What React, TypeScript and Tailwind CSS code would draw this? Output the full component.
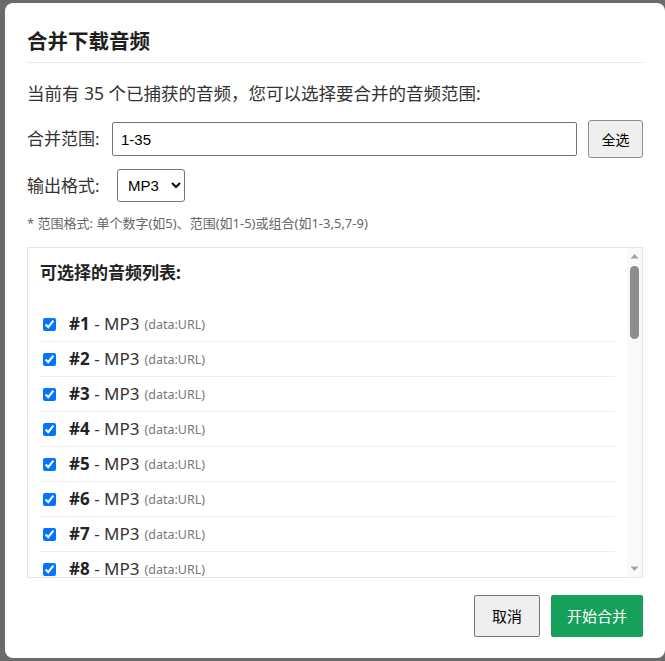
import React from "react";

const items = Array.from({ length: 35 }, (_, i) => i + 1);

export default function App() {
  return (
    <div
      className="w-[665px] h-[661px] bg-[#6b6b6b] pl-[5px] pt-[3px] overflow-hidden"
      style={{ fontFamily: '"Noto Sans", "Noto Sans CJK SC", sans-serif' }}
    >
      <div className="w-[660px] h-[655px] bg-white rounded-[8px] px-[22px] pt-[20px] text-[#222]">
        <div className="h-[40px] border-b border-[#e8e8e8]">
          <h2 className="text-[20.5px] leading-[36px] font-bold text-[#1f1f1f]">合并下载音频</h2>
        </div>
        <p className="mt-[17px] text-[17.5px] leading-[26px] text-[#333]">
          当前有 35 个已捕获的音频，您可以选择要合并的音频范围:
        </p>
        <div className="mt-[14px] flex items-center h-[38px]">
          <span className="text-[17px] text-[#333] w-[85px] shrink-0">合并范围:</span>
          <input
            type="text"
            defaultValue="1-35"
            className="w-[465px] h-[34px] border border-[#767676] rounded-[2px] px-[8px] text-[15px] text-black"
            style={{ fontFamily: '"Liberation Sans", Arial, sans-serif' }}
          />
          <button className="ml-[11px] w-[55px] h-[38px] bg-[#efefef] border border-[#8f8f8f] rounded-[3px] text-[14px] text-black">
            全选
          </button>
        </div>
        <div className="mt-[11px] flex items-center h-[33px]">
          <span className="text-[17px] text-[#333] w-[90px] shrink-0">输出格式:</span>
          <select
            defaultValue="MP3"
            className="w-[68px] h-[33px] border border-[#767676] rounded-[3px] px-[6px] text-[15px] text-black bg-white"
            style={{ fontFamily: '"Liberation Sans", Arial, sans-serif', appearance: "auto" }}
          >
            <option>MP3</option>
            <option>WAV</option>
          </select>
        </div>
        <p className="mt-[12px] text-[13px] leading-[18px] text-[#666]">
          * 范围格式: 单个数字(如5)、范围(如1-5)或组合(如1-3,5,7-9)
        </p>
        <div className="mt-[15px] h-[331px] border border-[#e6e6e6] flex">
          <div className="flex-1 overflow-hidden pl-[11px] pr-[12px] pt-[12px]">
            <h4 className="text-[17px] leading-[26px] font-bold text-[#222] pl-[1px]">可选择的音频列表:</h4>
            <div className="mt-[21px]">
              {items.map((n) => (
                <label
                  key={n}
                  className="flex items-center h-[35px] border-b border-[#eeeeee] text-[17px]"
                >
                  <input type="checkbox" defaultChecked className="ml-[4px] mr-[13px] w-[13px] h-[13px]" />
                  <span className="font-bold text-[#222]">#{n}</span>
                  <span className="text-[#333]">&nbsp;- MP3</span>
                  <span className="ml-[5px] text-[12.5px] text-[#777] mt-[3px]">(data:URL)</span>
                </label>
              ))}
            </div>
          </div>
          <div className="w-[15px] shrink-0 bg-[#f9f9f9] flex flex-col items-center">
            <svg width="15" height="16" viewBox="0 0 15 16" className="shrink-0">
              <path d="M3.5 10.5 L7.5 6 L11.5 10.5 Z" fill="#a3a3a3" />
            </svg>
            <div className="w-[9px] h-[73px] mt-[2px] rounded-full bg-[#8d8d8d]" />
            <div className="flex-1" />
            <svg width="15" height="16" viewBox="0 0 15 16" className="shrink-0">
              <path d="M3.5 5.5 L7.5 10 L11.5 5.5 Z" fill="#a3a3a3" />
            </svg>
          </div>
        </div>
        <div className="mt-[17px] flex justify-end gap-[11px]">
          <button className="w-[66px] h-[42px] bg-[#efefef] border border-[#767676] rounded-[2px] text-[15px] text-black">
            取消
          </button>
          <button className="w-[92px] h-[42px] bg-[#16a05a] text-white text-[15px] rounded-[2px]">
            开始合并
          </button>
        </div>
      </div>
    </div>
  );
}
